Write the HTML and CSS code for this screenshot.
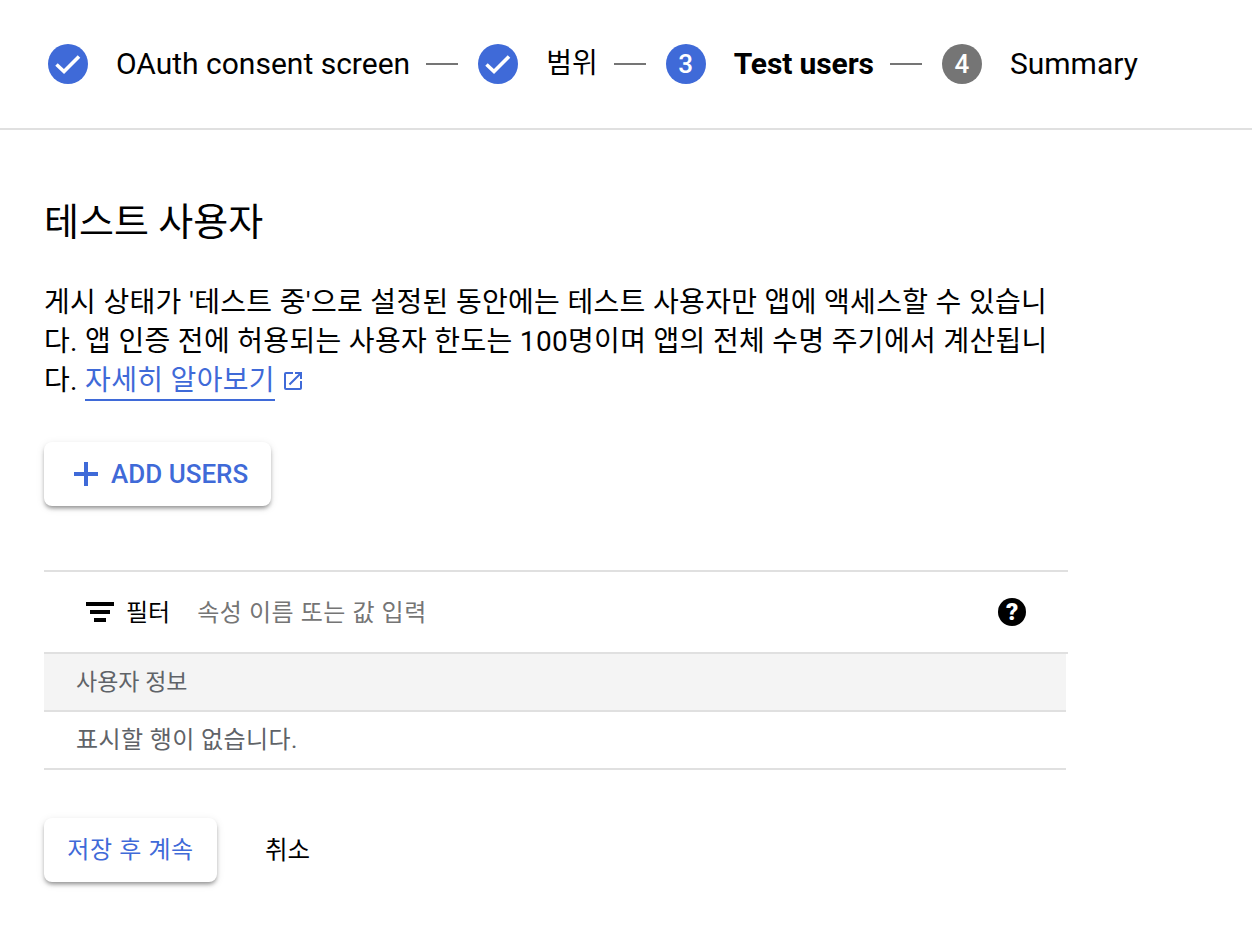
FILE: index.html
```html
<!DOCTYPE html>
<html lang="ko">
<head>
<meta charset="utf-8">
<title>Test users</title>
<link rel="stylesheet" href="styles.css">
</head>
<body>
<header class="stepper">
  <div class="step">
    <span class="badge badge-blue"><svg class="check" viewBox="0 0 40 40"><path d="M8.500 20.500l7.500 7 15-15" fill="none" stroke="#fff" stroke-width="3.600"/></svg></span>
    <span class="step-label">OAuth consent screen</span>
  </div>
  <span class="connector"></span>
  <div class="step">
    <span class="badge badge-blue"><svg class="check" viewBox="0 0 40 40"><path d="M8.500 20.500l7.500 7 15-15" fill="none" stroke="#fff" stroke-width="3.600"/></svg></span>
    <span class="step-label step-ko">범위</span>
  </div>
  <span class="connector"></span>
  <div class="step">
    <span class="badge badge-blue">3</span>
    <span class="step-label step-active">Test users</span>
  </div>
  <span class="connector"></span>
  <div class="step">
    <span class="badge badge-grey">4</span>
    <span class="step-label">Summary</span>
  </div>
</header>
<main class="content">
  <h1 class="title">테스트 사용자</h1>
  <p class="desc">게시 상태가 '테스트 중'으로 설정된 동안에는 테스트 사용자만 앱에 액세스할 수 있습니다. 앱 인증 전에 허용되는 사용자 한도는 100명이며 앱의 전체 수명 주기에서 계산됩니다. <a class="link" href="#">자세히 알아보기</a><svg class="ext" viewBox="0 0 24 24"><path fill="#3f6ad8" d="M19 19H5V5h7V3H5a2 2 0 0 0-2 2v14a2 2 0 0 0 2 2h14c1.100 0 2-.9 2-2v-7h-2v7zM14 3v2h3.590l-9.830 9.830 1.410 1.410L19 6.410V10h2V3h-7z"/></svg></p>
  <button class="raised add-btn" type="button"><svg class="plus" viewBox="0 0 24 24"><path fill="#3f6ad8" d="M10 0h4v10h10v4H14v10h-4V14H0v-4h10z"/></svg>ADD USERS</button>
  <section class="table">
    <div class="filter">
      <svg class="filter-icon" viewBox="0 0 28 20"><path d="M0 0h28v4H0zM4 8h20v4H4zM8 16h12v4H8z" fill="#000"/></svg>
      <span class="filter-label">필터</span>
      <span class="filter-hint">속성 이름 또는 값 입력</span>
      <svg class="help" viewBox="0 0 28 28"><circle cx="14" cy="14" r="14" fill="#000"/><text class="help-q" x="14" y="22" text-anchor="middle">?</text></svg>
    </div>
    <div class="col-head">사용자 정보</div>
    <div class="empty">표시할 행이 없습니다.</div>
  </section>
  <div class="actions">
    <button class="raised save-btn" type="button">저장 후 계속</button>
    <button class="cancel-btn" type="button">취소</button>
  </div>
</main>
</body>
</html>
```
FILE: styles.css
```css
* { box-sizing: border-box; }
html, body { margin: 0; padding: 0; background: #fff; }
body {
  width: 1252px;
  height: 928px;
  overflow: hidden;
  font-family: Roboto, "Noto Sans CJK KR", sans-serif;
  color: #000;
}
.stepper {
  display: flex;
  align-items: center;
  height: 130px;
  padding-left: 48px;
  border-bottom: 2px solid #e0e0e0;
}
.step { display: flex; align-items: center; }
.badge {
  width: 40px;
  height: 40px;
  border-radius: 50%;
  display: flex;
  align-items: center;
  justify-content: center;
  color: #fff;
  font-size: 26px;
  font-weight: 500;
}
.badge-blue { background: #3f6ad8; }
.badge-grey { background: #757575; }
.check { width: 40px; height: 40px; display: block; }
.step-label { margin-left: 28px; font-size: 30px; line-height: 40px; white-space: nowrap; }
.step-ko { font-size: 28px; }
.step-active { font-weight: 700; letter-spacing: -.1px; }
.connector { width: 32px; height: 2px; background: #757575; margin: 0 20px 0 16px; }
.content { padding-left: 44px; }
.title { margin: 68px 0 0; font-size: 38px; line-height: 48px; font-weight: 400; }
.desc { margin: 37px 0 0; width: 1008px; height: 117px; font-size: 28px; line-height: 39px; letter-spacing: .32px; word-break: break-all; }
.link { color: #3f6ad8; text-decoration: none; border-bottom: 2px solid #3f6ad8; padding-bottom: 2px; }
.ext { width: 24px; height: 24px; margin-left: 6px; vertical-align: -3px; }
.raised {
  display: flex;
  align-items: center;
  border: 0;
  background: #fff;
  border-radius: 8px;
  color: #3f6ad8;
  font-family: inherit;
  box-shadow: 0 3px 4px -1px rgba(0,0,0,.4), 0 2px 8px rgba(0,0,0,.1);
}
.add-btn {
  margin-top: 42px;
  width: 227px;
  height: 64px;
  padding: 0 0 0 30px;
  font-size: 26px;
  font-weight: 500;
}
.plus { width: 24px; height: 24px; margin-right: 13px; }
.table { margin-top: 64px; width: 1024px; }
.filter {
  display: flex;
  align-items: center;
  height: 84px;
  padding: 0 42px;
  border-top: 2px solid #e0e0e0;
  border-bottom: 2px solid #e0e0e0;
}
.filter-icon { width: 28px; height: 20px; }
.filter-label { margin-left: 12px; padding-bottom: 4px; font-size: 24px; }
.filter-hint { margin-left: 27px; padding-bottom: 4px; font-size: 24px; letter-spacing: .55px; color: #757575; flex: 1; }
.help { width: 28px; height: 28px; }
.help-q { font-size: 24px; font-weight: 900; fill: #fff; }
.col-head {
  width: 1022px;
  height: 58px;
  padding: 0 0 4px 32px;
  display: flex;
  align-items: center;
  background: #f4f4f4;
  border-bottom: 2px solid #e0e0e0;
  font-size: 23px;
  color: #5f6368;
}
.empty {
  width: 1022px;
  height: 58px;
  padding: 0 0 5px 32px;
  display: flex;
  align-items: center;
  border-bottom: 2px solid #e0e0e0;
  font-size: 24px;
  letter-spacing: .4px;
  color: #5f6368;
}
.actions { display: flex; align-items: center; margin-top: 48px; }
.save-btn {
  width: 173px;
  height: 64px;
  padding: 0 0 5px;
  justify-content: center;
  font-size: 24px;
  letter-spacing: .6px;
  font-weight: 400;
}
.cancel-btn {
  margin-left: 48px;
  padding: 0 0 4px;
  border: 0;
  background: none;
  font-family: inherit;
  font-size: 24.500px;
  color: #000;
}
```
